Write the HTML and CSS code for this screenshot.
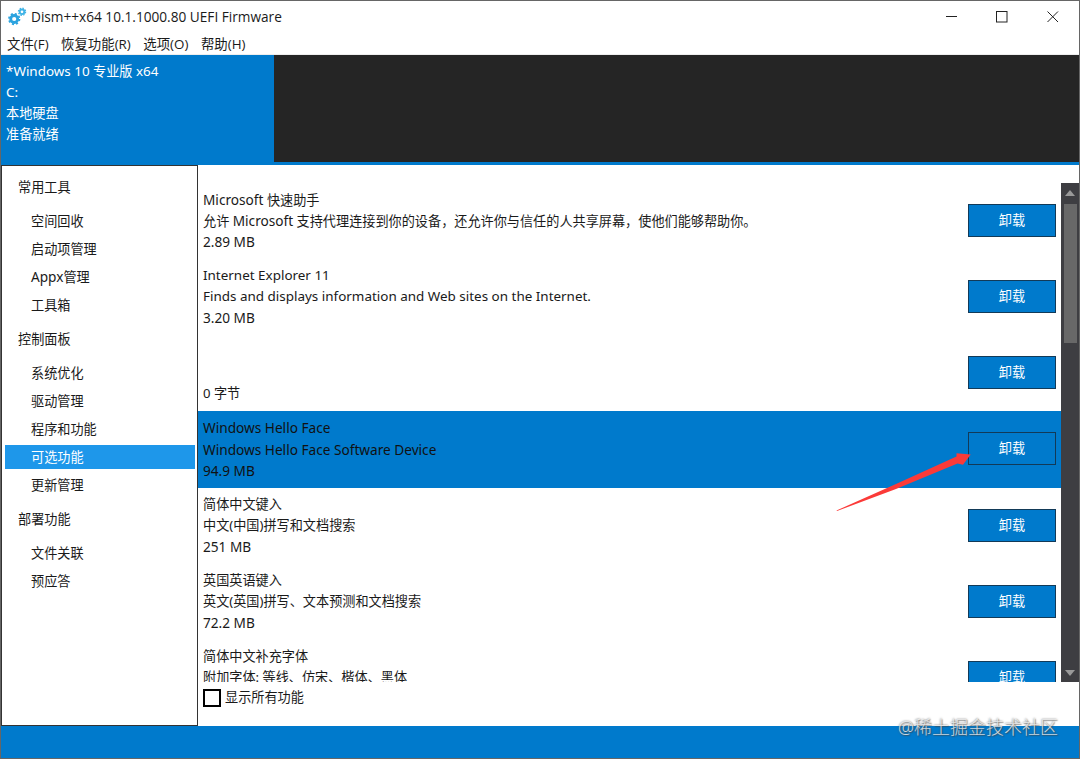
FILE: index.html
```html
<!DOCTYPE html>
<html lang="zh-CN">
<head>
<meta charset="UTF-8">
<meta name="viewport" content="width=device-width, initial-scale=1.0">
<title>Dism++x64</title>
<link rel="stylesheet" href="styles.css">
</head>
<body>

<div class="window">
    <!-- Title bar -->
    <div class="title-bar">
        <svg class="logo" width="20" height="20" viewBox="0 0 20 20" fill="none" stroke="#2ba3df">
            <circle cx="6.2" cy="12" r="3.5" stroke-width="2.8"/>
            <circle cx="6.2" cy="12" r="5.3" stroke-width="1.7" stroke-dasharray="2.1 2.06"/>
            <circle cx="14" cy="4.8" r="2.3" stroke-width="1.9" stroke="#3fb3e6"/>
            <circle cx="14" cy="4.8" r="3.6" stroke-width="1.3" stroke="#3fb3e6" stroke-dasharray="1.42 1.41"/>
        </svg>
        <span class="title">Dism++x64 10.1.1000.80 UEFI Firmware</span>
        <div class="controls">
            <svg width="11" height="12" viewBox="0 0 11 12"><path d="M0 5.5h11" stroke="#222"/></svg>
            <svg width="12" height="12" viewBox="0 0 12 12"><rect x=".5" y=".5" width="10.5" height="10.5" fill="none" stroke="#222"/></svg>
            <svg width="12" height="12" viewBox="0 0 12 12"><path d="M.5 .5l10.5 10.5M11 .5l-10.5 10.5" stroke="#222"/></svg>
        </div>
    </div>

    <div class="menu">
        <span>文件(F)</span>
        <span>恢复功能(R)</span>
        <span>选项(O)</span>
        <span>帮助(H)</span>
    </div>

    <!-- System images -->
    <div class="images">
        <div class="image-card">
            <div><span class="en">*Windows 10</span> 专业版 <span class="en">x64</span></div>
            <div class="en">C:</div>
            <div>本地硬盘</div>
            <div>准备就绪</div>
        </div>
    </div>

    <div class="main">
        <div class="sidebar">
            <div class="group">常用工具</div>
            <div class="item">空间回收</div>
            <div class="item">启动项管理</div>
            <div class="item"><span class="en-wide">Appx</span>管理</div>
            <div class="item">工具箱</div>
            <div class="group">控制面板</div>
            <div class="item">系统优化</div>
            <div class="item">驱动管理</div>
            <div class="item">程序和功能</div>
            <div class="item active">可选功能</div>
            <div class="item">更新管理</div>
            <div class="group">部署功能</div>
            <div class="item">文件关联</div>
            <div class="item">预应答</div>
        </div>

        <div class="content">
            <div class="list-area">
                <div class="list">
                    <div class="row">
                        <div class="info">
                            <div><span class="en-wide">Microsoft</span> 快速助手</div>
                            <div>允许 <span class="en-wide">Microsoft</span> 支持代理连接到你的设备，还允许你与信任的人共享屏幕，使他们能够帮助你。</div>
                            <div class="en-wide">2.89 MB</div>
                        </div>
                        <button class="uninstall">卸载</button>
                    </div>
                    <div class="row">
                        <div class="info">
                            <div class="en">Internet Explorer 11</div>
                            <div class="en">Finds and displays information and Web sites on the Internet.</div>
                            <div class="en-wide">3.20 MB</div>
                        </div>
                        <button class="uninstall">卸载</button>
                    </div>
                    <div class="row">
                        <div class="info">
                            <div></div>
                            <div></div>
                            <div>0 字节</div>
                        </div>
                        <button class="uninstall">卸载</button>
                    </div>
                    <div class="row selected">
                        <div class="info">
                            <div class="en-wide">Windows Hello Face</div>
                            <div class="en-wide">Windows Hello Face Software Device</div>
                            <div class="en-wide">94.9 MB</div>
                        </div>
                        <button class="uninstall">卸载</button>
                    </div>
                    <div class="row">
                        <div class="info">
                            <div>简体中文键入</div>
                            <div>中文(中国)拼写和文档搜索</div>
                            <div class="en-wide">251 MB</div>
                        </div>
                        <button class="uninstall">卸载</button>
                    </div>
                    <div class="row">
                        <div class="info">
                            <div>英国英语键入</div>
                            <div>英文(英国)拼写、文本预测和文档搜索</div>
                            <div class="en-wide">72.2 MB</div>
                        </div>
                        <button class="uninstall">卸载</button>
                    </div>
                    <div class="row">
                        <div class="info">
                            <div>简体中文补充字体</div>
                            <div>附加字体: 等线、仿宋、楷体、黑体</div>
                            <div></div>
                        </div>
                        <button class="uninstall">卸载</button>
                    </div>
                </div>
                <div class="scrollbar">
                    <svg width="10" height="6" viewBox="0 0 10 6"><path d="M0 6l5-6 5 6z" fill="#999"/></svg>
                    <div class="thumb"></div>
                    <svg width="10" height="6" viewBox="0 0 10 6"><path d="M0 0h10l-5 6z" fill="#999"/></svg>
                </div>
            </div>
            <label class="show-all"><span class="checkbox"></span>显示所有功能</label>
        </div>
    </div>

    <div class="status-bar"></div>

    <!-- Red pointer over the selected row's button -->
    <svg class="arrow" width="136" height="60" viewBox="0 0 136 60">
        <path d="M0.5 58.5L60 32L120.5 4.5L120.5 1.3L134.7 2.5L127 12.8L121.5 11.5L60 37L1 59z" fill="#fb3a38"/>
    </svg>
    <div class="watermark">@稀土掘金技术社区</div>
</div>

</body>
</html>
```
FILE: styles.css
```css
* {
    box-sizing: border-box;
}

body {
    margin: 0;
    font-family: "Noto Sans", "Noto Sans CJK SC", sans-serif;
    font-size: 13.15px;
    line-height: 21.1px;
    color: #1a1a1a;
}

.window {
    position: relative;
    display: flex;
    flex-direction: column;
    width: 1080px;
    height: 759px;
    background-color: #fff;
    border: 1px solid #666;
    overflow: hidden;
}

/* Latin runs are set slightly larger than the Chinese text */
.en {
    font-size: 13.45px;
}

.en-wide {
    font-size: 13.65px;
}

/* Title bar */
.title-bar {
    display: flex;
    align-items: center;
    height: 32px;
    padding: 0 20px 0 7px;
}

.title {
    margin-left: 3px;
    font-family: "Open Sans", sans-serif;
    font-size: 13.65px;
}

.controls {
    display: flex;
    gap: 39px;
    margin-left: auto;
}

.menu {
    display: flex;
    height: 22px;
    padding: 1px 0 0 6px;
    font-family: "Open Sans", "Noto Sans CJK SC", sans-serif;
    font-size: 13.4px;
    border-bottom: 1px solid #eee;
}

.menu span {
    margin-right: 12.5px;
}

/* System images */
.images {
    height: 110px;
    background-color: #252525;
    border-bottom: 3px solid #007acc;
}

.image-card {
    width: 273px;
    height: 109px;
    padding: 6px 5px;
    color: #fff;
    background-color: #007acc;
}

.main {
    display: flex;
    height: 561px;
}

/* Sidebar */
.sidebar {
    width: 197px;
    padding: 1px 2px 0 3px;
    border: 1px solid #333;
}

.group {
    height: 40px;
    padding-left: 13px;
    line-height: 40px;
}

.item {
    height: 28px;
    padding-left: 26px;
    line-height: 28px;
}

.item.active {
    height: 24px;
    margin: 2px 0;
    line-height: 24px;
    color: #fff;
    background-color: #1e97ea;
}

/* Feature list */
.content {
    flex: 1;
    padding-top: 18px;
}

.list-area {
    display: flex;
    height: 499px;
    overflow: hidden;
}

.list {
    flex: 1;
}

.row {
    display: flex;
    justify-content: space-between;
    height: 76.15px;
    padding: 6px 5px 0;
}

.row.selected {
    color: #111;
    background-color: #007acc;
}

.info div {
    height: 21.1px;
    white-space: nowrap;
}

.uninstall {
    width: 88px;
    height: 33px;
    margin-top: 15px;
    padding: 0;
    font: inherit;
    color: #fff;
    background-color: #007acc;
    border: 1px solid #123a58;
}

.scrollbar {
    display: flex;
    flex-direction: column;
    align-items: center;
    width: 18px;
    padding: 7px 0 6px;
    background-color: #3e3e42;
}

.thumb {
    width: 13px;
    height: 139px;
    margin: 8px 0 auto;
    background-color: #686868;
}

.show-all {
    display: flex;
    align-items: center;
    height: 32px;
    padding-left: 5px;
}

.checkbox {
    width: 18px;
    height: 18px;
    margin-right: 4px;
    border: 2px solid #000;
}

.status-bar {
    flex: 1;
    background-color: #007acc;
}

/* Overlays */
.arrow {
    position: absolute;
    left: 835px;
    top: 451px;
}

.watermark {
    position: absolute;
    right: 21px;
    top: 714px;
    font-size: 18px;
    line-height: 24px;
    font-weight: 300;
    color: rgba(255, 255, 255, 0.75);
    text-shadow: 0 0 2px #555, 1px 1px 1px rgba(60, 60, 60, 0.5);
}
```
